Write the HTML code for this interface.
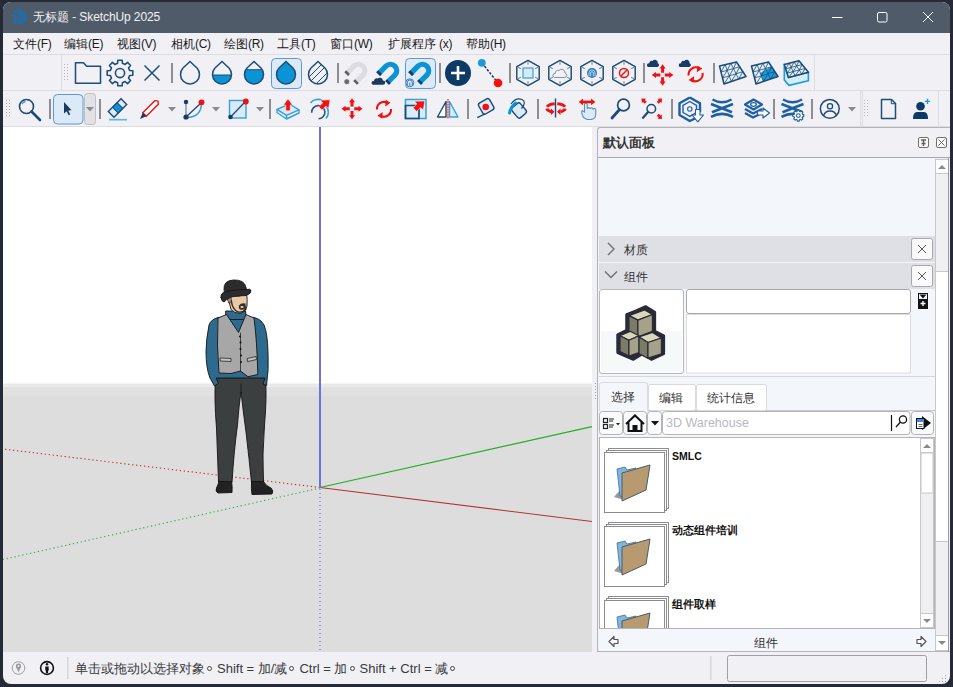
<!DOCTYPE html>
<html><head><meta charset="utf-8">
<style>
*{box-sizing:border-box}
html,body{margin:0;padding:0}
body{width:953px;height:687px;background:#262a36;position:relative;overflow:hidden;font-family:"Liberation Sans",sans-serif}
.a{position:absolute;white-space:nowrap}
.mi{position:absolute;top:37px;font-size:12px;line-height:15px;color:#1a1a1a;white-space:nowrap}
.l{letter-spacing:-0.3px}
svg{position:absolute;left:0;top:0}
</style></head><body>
<div class="a" style="left:3px;top:2px;width:947px;height:682px;border-radius:8px;background:#f0f0f5"></div>
<div class="a" style="left:3px;top:2px;width:947px;height:30.8px;background:#505b6a;border-radius:8px 8px 0 0"></div>
<div class="a" style="left:33px;top:10px;font-size:12px;line-height:15px;color:#f2f2f2">无标题<span style="letter-spacing:-0.1px"> - SketchUp 2025</span></div>
<div class="mi" style="left:13px">文件<span class="l">(F)</span></div>
<div class="mi" style="left:64px">编辑<span class="l">(E)</span></div>
<div class="mi" style="left:117px">视图<span class="l">(V)</span></div>
<div class="mi" style="left:171px">相机<span class="l">(C)</span></div>
<div class="mi" style="left:224px">绘图<span class="l">(R)</span></div>
<div class="mi" style="left:277px">工具<span class="l">(T)</span></div>
<div class="mi" style="left:330px">窗口<span class="l">(W)</span></div>
<div class="mi" style="left:388px">扩展程序<span class="l"> (x)</span></div>
<div class="mi" style="left:466px">帮助<span class="l">(H)</span></div>
<svg width="953" height="130" viewBox="0 0 953 130">
<defs>
  <clipPath id="winclip"><rect x="3" y="2" width="947" height="200"/></clipPath>
  <path id="drop" d="M0,-12.5 L6.98,-5.95 A9.5 9.5 0 1 1 -6.98,-5.95 Z"/>
  <clipPath id="half2"><rect x="-12" y="1" width="24" height="14"/></clipPath>
  <clipPath id="half3"><rect x="-12" y="-4.3" width="24" height="20"/></clipPath>
  <clipPath id="dropc"><use href="#drop"/></clipPath>
  <g id="sep"><rect x="-1" y="0" width="2" height="20" fill="#8d8d92"/></g>
  <path id="tri" d="M-4,-2 h8 l-4,4.5 z" fill="#8a8a8f"/>
  <g id="grip" fill="#b4b4bc">
    <rect x="0" y="0" width="1" height="1"/><rect x="3" y="0" width="1" height="1"/>
    <rect x="0" y="3" width="1" height="1"/><rect x="3" y="3" width="1" height="1"/>
    <rect x="0" y="6" width="1" height="1"/><rect x="3" y="6" width="1" height="1"/>
    <rect x="0" y="9" width="1" height="1"/><rect x="3" y="9" width="1" height="1"/>
    <rect x="0" y="12" width="1" height="1"/><rect x="3" y="12" width="1" height="1"/>
    <rect x="0" y="15" width="1" height="1"/><rect x="3" y="15" width="1" height="1"/>
  </g>
  <g id="hex" fill="none" stroke="#1d4a74" stroke-width="1.45">
    <path d="M0,-12.6 L11.2,-6.3 L11.2,6.3 L0,12.6 L-11.2,6.3 L-11.2,-6.3 Z" stroke-linejoin="round"/>
    <path d="M0,-11.5 v3.2 M10,-5.8 l-2.8,1.6 M-10,-5.8 l2.8,1.6 M0,11.5 v-3.2 M10,5.8 l-2.8,-1.6 M-10,5.8 l2.8,-1.6" stroke-width="1.1" stroke="#7890a8"/>
  </g>
  <g id="magnet">
    <path d="M-6,7 L-6,0 A6 6 0 0 1 6,0 L6,7" fill="none" stroke-width="5.5"/>
  </g>
  <g id="cloud"><path d="M-6,3 h12 a3,3 0 0 0 0,-6 a4,4 0 0 0 -7,-2 a3,3 0 0 0 -5,4 a2,2 0 0 0 0,4z"/></g>
</defs>
<g clip-path="url(#winclip)">
<!-- title bar icons -->
<g fill="none" stroke="#1b70b5" stroke-width="1.5" stroke-linejoin="round">
  <path d="M13.2,12.6 L19,9.4 L25.6,12.9 V20.6 L19.3,24.2"/>
  <path d="M15.6,13.4 L19,11.4 L22.9,13.6 V19.6 L19.8,21.4"/>
  <path d="M12.2,14.8 L18.6,18 V24.3 M12.4,18.2 L17.2,20.8 M12.6,21 L16.8,23.4"/>
  <path d="M17.2,12.6 L20.4,14.4 V20.5"/>
</g>
<g stroke="#ffffff" stroke-width="1" fill="none">
  <path d="M832,17.5 h10.5"/>
  <rect x="877.5" y="12.5" width="9.5" height="9.5" rx="1.5"/>
  <path d="M923,12 L933,22 M933,12 L923,22"/>
</g>
<!-- menu separator & toolbar panel outlines -->
<rect x="3" y="54" width="947" height="1" fill="#dcdce2"/>
<rect x="61" y="55" width="1" height="35" fill="#dcdce2"/>
<rect x="814" y="55" width="1" height="35" fill="#dcdce2"/>
<rect x="3" y="90" width="947" height="1" fill="#dcdce2"/>
<rect x="860" y="91" width="1" height="35" fill="#dcdce2"/>
<rect x="862" y="91" width="1" height="35" fill="#dcdce2"/>
<rect x="938" y="91" width="1" height="35" fill="#dcdce2"/>
<rect x="3" y="126" width="947" height="1" fill="#dcdce2"/>

<!-- ROW 1 -->
<use href="#grip" x="64" y="64"/>
<g fill="none" stroke="#1f4e79" stroke-width="1.55" stroke-linejoin="round">
  <path d="M75.5,62.8 H83.5 L86.6,66.2 H100.5 V83.2 H75.5 Z"/>
  <!-- gear -->
  <path d="M117.58,63.30 L117.85,60.18 L122.15,60.18 L122.42,63.30 L125.15,64.43 L127.55,62.42 L130.58,65.45 L128.57,67.85 L129.70,70.58 L132.82,70.85 L132.82,75.15 L129.70,75.42 L128.57,78.15 L130.58,80.55 L127.55,83.58 L125.15,81.57 L122.42,82.70 L122.15,85.82 L117.85,85.82 L117.58,82.70 L114.85,81.57 L112.45,83.58 L109.42,80.55 L111.43,78.15 L110.30,75.42 L107.18,75.15 L107.18,70.85 L110.30,70.58 L111.43,67.85 L109.42,65.45 L112.45,62.42 L114.85,64.43 Z"/>
  <circle cx="120" cy="73" r="4.6"/>
  <path d="M144.5,65.5 L159.5,80.5 M159.5,65.5 L144.5,80.5" stroke-width="1.5"/>
</g>
<use href="#sep" x="172" y="63"/>
<!-- drops -->
<g transform="translate(190,74)"><use href="#drop" fill="#f0f0f5" stroke="#1f4e79" stroke-width="1.55"/></g>
<g transform="translate(222,74)"><use href="#drop" fill="#0a94d6" clip-path="url(#half2)"/><use href="#drop" fill="none" stroke="#1f4e79" stroke-width="1.55"/><path d="M-9.3,1 h18.6" stroke="#1f4e79" stroke-width="1"/></g>
<g transform="translate(254,74)"><use href="#drop" fill="#0a94d6" clip-path="url(#half3)"/><use href="#drop" fill="none" stroke="#1f4e79" stroke-width="1.55"/><path d="M-8.2,-4.3 h16.4" stroke="#1f4e79" stroke-width="1"/></g>
<rect x="271.5" y="58.5" width="30" height="30" rx="4" fill="#dce9f7" stroke="#5c9ad6" stroke-width="1"/>
<g transform="translate(286,74)"><use href="#drop" fill="#0a94d6" stroke="#1f4e79" stroke-width="1.55"/></g>
<g transform="translate(318,74)">
  <g clip-path="url(#dropc)" stroke="#1f4e79" stroke-width="1"><path d="M-12,6 L6,-12 M-12,12 L12,-12 M-8,16 L14,-6 M-2,18 L16,0"/></g>
  <use href="#drop" fill="none" stroke="#1f4e79" stroke-width="1.55"/>
</g>
<use href="#sep" x="338" y="63"/>
<!-- magnets -->
<g transform="translate(358.4,70.7) rotate(45)">
  <path d="M-6.3,11 V0 A6.3 6.3 0 0 1 6.3,0 V11" fill="none" stroke="#dcdce2" stroke-width="5.3"/>
  <path d="M-6.3,8.3 v2.7 M6.3,8.3 v2.7" stroke="#5e5e64" stroke-width="5.3"/>
</g>
<circle cx="346.8" cy="81.7" r="3" fill="#6a6a70" stroke="#fff" stroke-width="0.8"/>
<rect x="405.5" y="58.5" width="30" height="30" rx="4" fill="#dce9f7" stroke="#5c9ad6" stroke-width="1"/>
<g transform="translate(390.4,70.7) rotate(45)">
  <path d="M-6.3,11 V0 A6.3 6.3 0 0 1 6.3,0 V11" fill="none" stroke="#0a94d6" stroke-width="5.3"/>
  <path d="M-6.3,8.3 v2.7 M6.3,8.3 v2.7" stroke="#1b3a5e" stroke-width="5.3"/>
</g>
<path d="M373,84.8 h10 a2.2,2.2 0 0 0 0,-4.4 a3.3,3.3 0 0 0 -5.5,-1.8 a2.6,2.6 0 0 0 -3.6,2.6 a1.8,1.8 0 0 0 -0.9,3.6z" fill="#1b3a5e"/>
<g transform="translate(422.4,70.7) rotate(45)">
  <path d="M-6.3,11 V0 A6.3 6.3 0 0 1 6.3,0 V11" fill="none" stroke="#0a94d6" stroke-width="5.3"/>
  <path d="M-6.3,8.3 v2.7 M6.3,8.3 v2.7" stroke="#1b3a5e" stroke-width="5.3"/>
</g>
<circle cx="409.8" cy="82.8" r="4.6" fill="#dce9f7"/>
<g fill="none" stroke="#2a6fb0" stroke-width="0.9"><circle cx="409.8" cy="82.8" r="4"/><path d="M407.3,85.5 v-3 a2.5,2.5 0 0 1 5,0 v3 M409.8,86 v-3.5"/></g>
<use href="#sep" x="440" y="63"/>
<circle cx="458" cy="73" r="13" fill="#0e3a66"/>
<path d="M451,73 h14 M458,66 v14" stroke="#fff" stroke-width="2.6"/>
<path d="M482,63 L498,83" stroke="#1b3a5e" stroke-width="1.5" stroke-dasharray="2.5,1.5"/>
<circle cx="481.8" cy="62.8" r="3.9" fill="#1a9ad9"/>
<circle cx="498" cy="83" r="4.3" fill="#f21010"/>
<use href="#sep" x="510" y="63"/>
<!-- hexes -->
<g transform="translate(528,73)"><use href="#hex"/><rect x="-5" y="-5" width="10" height="10" fill="#d6e9f8" stroke="#34a0dc" stroke-width="1.2"/></g>
<g transform="translate(560,73)"><use href="#hex"/><path d="M-5.5,4.5 h10 a2.3,2.3 0 0 0 0.5,-4.5 a3.4,3.4 0 0 0 -6,-2.5 a2.7,2.7 0 0 0 -3.7,3 a2,2 0 0 0 -0.8,4z" fill="none" stroke="#7c94ac" stroke-width="1"/></g>
<g transform="translate(592,73)"><use href="#hex"/><circle r="5" fill="#2a7cc0"/><g fill="none" stroke="#d8ecf8" stroke-width="0.8"><path d="M-3,3 v-3 a3,3 0 0 1 6,0 v3 M-1.3,3.5 v-3.5 a1.3,1.3 0 0 1 2.6,0 v3.5"/></g></g>
<g transform="translate(624,73)"><use href="#hex"/><circle r="4.5" fill="none" stroke="#f21010" stroke-width="1.5"/><path d="M-3,3 L3,-3" stroke="#f21010" stroke-width="1.5"/></g>
<use href="#sep" x="644" y="63"/>
<!-- cloud move -->
<path d="M648.2,66.9 h9 a1.9,1.9 0 0 0 0.6,-3.7 a3,3 0 0 0 -5.3,-2.3 a2.4,2.4 0 0 0 -3.2,2.6 a1.7,1.7 0 0 0 -1.1,3.4z" fill="#173d66"/>
<path d="M662.60,64.20 L665.60,68.40 L664.10,68.40 L664.10,72.80 L661.10,72.80 L661.10,68.40 L659.60,68.40 Z M662.60,85.80 L659.60,81.60 L661.10,81.60 L661.10,77.20 L664.10,77.20 L664.10,81.60 L665.60,81.60 Z M651.80,75.00 L656.00,72.00 L656.00,73.50 L660.40,73.50 L660.40,76.50 L656.00,76.50 L656.00,78.00 Z M673.40,75.00 L669.20,78.00 L669.20,76.50 L664.80,76.50 L664.80,73.50 L669.20,73.50 L669.20,72.00 Z" fill="#f21010"/>
<!-- cloud rotate -->
<path d="M680,66.9 h9 a1.9,1.9 0 0 0 0.6,-3.7 a3,3 0 0 0 -5.3,-2.3 a2.4,2.4 0 0 0 -3.2,2.6 a1.7,1.7 0 0 0 -1.1,3.4z" fill="#173d66"/>
<g fill="none" stroke="#f21010" stroke-width="2.1"><path d="M699.5,68.3 A7.3,7.3 0 0 0 688.6,75.5"/><path d="M691.5,80.2 A7.3,7.3 0 0 0 702.6,73"/></g>
<path d="M702.3,68.6 l-5.5,3.7 l0.5,-6.5z M688.6,80 l5.5,-3.7 l-0.5,6.5z" fill="#f21010"/>
<use href="#sep" x="714" y="63"/>
<!-- meshes -->
<path d="M719.50,66.00 L736.50,62.00 L746.00,76.50 L724.00,84.00 Z" fill="#e4f0f9"/>
<path d="M725.17,64.67 L731.33,81.50 M721.00,72.00 L739.67,66.83 M730.83,63.33 L738.67,79.00 M722.50,78.00 L742.83,71.67 M721.00,72.00 L725.17,64.67 M722.50,78.00 L727.22,70.28 M724.00,84.00 L729.28,75.89 M727.22,70.28 L730.83,63.33 M729.28,75.89 L733.44,68.56 M731.33,81.50 L736.06,73.78 M733.44,68.56 L736.50,62.00 M736.06,73.78 L739.67,66.83 M738.67,79.00 L742.83,71.67 " fill="none" stroke="#1d4a74" stroke-width="0.8"/>
<path d="M719.50,66.00 L736.50,62.00 L746.00,76.50 L724.00,84.00 Z" fill="none" stroke="#1d4a74" stroke-width="1.5" stroke-linejoin="round"/>
<path d="M751.50,66.00 L768.50,62.00 L778.00,76.50 L756.00,84.00 Z" fill="#e4f0f9"/>
<path d="M760.25,73.08 L771.35,66.35 L778.00,76.50 L763.33,81.50 Z" fill="#1a9be0"/>
<path d="M757.17,64.67 L763.33,81.50 M753.00,72.00 L771.67,66.83 M762.83,63.33 L770.67,79.00 M754.50,78.00 L774.83,71.67 M753.00,72.00 L757.17,64.67 M754.50,78.00 L759.22,70.28 M756.00,84.00 L761.28,75.89 M759.22,70.28 L762.83,63.33 M761.28,75.89 L765.44,68.56 M763.33,81.50 L768.06,73.78 M765.44,68.56 L768.50,62.00 M768.06,73.78 L771.67,66.83 M770.67,79.00 L774.83,71.67 " fill="none" stroke="#1d4a74" stroke-width="0.8"/>
<path d="M751.50,66.00 L768.50,62.00 L778.00,76.50 L756.00,84.00 Z" fill="none" stroke="#1d4a74" stroke-width="1.5" stroke-linejoin="round"/>
<path d="M788.5,77.5 L808.4,72.3 L808.4,80.7 L789,85.4 L784.3,80 V64.4 Z" fill="#d8ecf8" stroke="#1a9be0" stroke-width="1.6" stroke-linejoin="round"/>
<path d="M784.30,64.40 L799.00,60.70 L808.40,72.30 L788.50,77.50 Z" fill="#e4f0f9"/>
<path d="M789.20,63.17 L795.13,75.77 M785.70,68.77 L802.13,64.57 M794.10,61.93 L801.77,74.03 M787.10,73.13 L805.27,68.43 M785.70,68.77 L789.20,63.17 M787.10,73.13 L791.18,67.37 M788.50,77.50 L793.16,71.57 M791.18,67.37 L794.10,61.93 M793.16,71.57 L796.66,65.97 M795.13,75.77 L799.21,70.00 M796.66,65.97 L799.00,60.70 M799.21,70.00 L802.13,64.57 M801.77,74.03 L805.27,68.43 " fill="none" stroke="#1d4a74" stroke-width="0.8"/>
<path d="M784.30,64.40 L799.00,60.70 L808.40,72.30 L788.50,77.50 Z" fill="none" stroke="#1d4a74" stroke-width="1.5" stroke-linejoin="round"/>

<!-- ROW 2 -->
<use href="#grip" x="6" y="100"/>
<g fill="none" stroke="#1d4a74">
  <circle cx="26.5" cy="106.5" r="7" stroke-width="1.6"/>
  <path d="M31.5,111.5 L40,120" stroke-width="2.6" stroke-linecap="round"/>
  <path d="M22,104 A5,5 0 0 1 25.5,101.5" stroke="#34a0dc" stroke-width="1.3"/>
</g>
<use href="#sep" x="50" y="99"/>
<rect x="53.5" y="94.5" width="29.5" height="29.5" rx="4" fill="#dce9f7" stroke="#5c9ad6" stroke-width="1"/>
<path d="M64,102 L64,113.5 L66.6,111.2 L68.6,115.2 L70.2,114.4 L68.3,110.5 L71.5,110.3 Z" fill="#1b3a5e"/>
<rect x="84.5" y="93.5" width="11" height="31" rx="3" fill="#e2e2e6" stroke="#c0c0c4" stroke-width="1"/>
<use href="#tri" x="90" y="109"/>
<use href="#sep" x="100" y="99"/>
<!-- eraser -->
<g transform="translate(117.5,108) rotate(-45)">
  <rect x="-9" y="-4" width="18" height="8" fill="#d9ebf8" stroke="#1d4a74" stroke-width="1.4"/>
  <rect x="-3" y="-4" width="6.5" height="8" fill="#0a94d6" stroke="#1d4a74" stroke-width="1"/>
</g>
<path d="M109,119.7 h18" stroke="#5ab6e6" stroke-width="1.6"/>
<!-- pencil -->
<g transform="translate(149.5,109.5) rotate(-45)">
  <path d="M-7,-2.5 L10,-2.5 L12,0 L10,2.5 L-7,2.5 Z" fill="#fff" stroke="#f21010" stroke-width="1.4"/>
  <path d="M-7,-2.5 L-13.5,0 L-7,2.5 Z" fill="#1b3a5e"/>
</g>
<use href="#tri" x="172" y="109"/>
<!-- arc -->
<path d="M186,102 V117" stroke="#5f84a8" stroke-width="1.2"/>
<path d="M186,117 L201.5,102.5" stroke="#1d4a74" stroke-width="1.3"/>
<path d="M186.5,117.5 Q201.5,117.5 201.5,102.5" fill="none" stroke="#34a0dc" stroke-width="1.5"/>
<circle cx="186" cy="102" r="2.2" fill="#1b3a5e"/>
<circle cx="186" cy="117" r="2.6" fill="#1b3a5e"/>
<circle cx="201.5" cy="102.3" r="2.9" fill="#f21010"/>
<use href="#tri" x="216" y="109"/>
<!-- rect -->
<rect x="229.5" y="100.5" width="16.5" height="17.5" fill="#d9ebf8" stroke="#34a0dc" stroke-width="1.4"/>
<path d="M230.5,117 L245,102" stroke="#1d4a74" stroke-width="1.3"/>
<circle cx="230.5" cy="117" r="2.3" fill="#1b3a5e"/>
<circle cx="245.8" cy="101.5" r="2.9" fill="#f21010"/>
<use href="#tri" x="260" y="109"/>
<use href="#sep" x="270" y="99"/>
<!-- push pull -->
<path d="M277,109.4 L289.5,104 L299,109.8 L286.5,115.3 Z" fill="#d9ebf8" stroke="#34a0dc" stroke-width="1.4" stroke-linejoin="round"/>
<path d="M277,109.4 V112.5 L286.5,119 L299,113 V109.8 M286.5,115.3 V119" fill="none" stroke="#34a0dc" stroke-width="1.4" stroke-linejoin="round"/>
<path d="M288,98.8 L292.5,105 H290.2 V110.8 H285.8 V105 H283.5 Z" fill="#f21010" stroke="#fff" stroke-width="0.5"/>
<!-- follow me -->
<path d="M310.5,103 A9.5,9.5 0 0 1 322.5,100.5" fill="none" stroke="#34a0dc" stroke-width="1.6"/>
<path d="M326,106 A9.5,9.5 0 0 1 326,118.5" fill="none" stroke="#34a0dc" stroke-width="1.6"/>
<path d="M311.7,112.7 A6.6,6.6 0 1 1 318.5,118.8" fill="none" stroke="#2a5580" stroke-width="1.6"/>
<path d="M330,99.8 l-1.4,8.6 l-2.7,-2.3 l-3.9,4 l-3.3,-3.3 l4,-3.9 l-2.3,-2.7 z" fill="#f21010" stroke="#fff" stroke-width="0.5"/>
<!-- move -->
<path d="M352.00,98.30 L355.00,102.30 L353.50,102.30 L353.50,106.60 L350.50,106.60 L350.50,102.30 L349.00,102.30 Z M352.00,119.30 L349.00,115.30 L350.50,115.30 L350.50,111.00 L353.50,111.00 L353.50,115.30 L355.00,115.30 Z M341.50,108.80 L345.50,105.80 L345.50,107.30 L349.80,107.30 L349.80,110.30 L345.50,110.30 L345.50,111.80 Z M362.50,108.80 L358.50,111.80 L358.50,110.30 L354.20,110.30 L354.20,107.30 L358.50,107.30 L358.50,105.80 Z" fill="#f21010"/>
<!-- rotate -->
<g fill="none" stroke="#f21010" stroke-width="2.1"><path d="M386.8,102.5 A7,7 0 0 0 377,109.5"/><path d="M381,116 A7,7 0 0 0 391,109"/></g>
<path d="M390.5,102.8 l-5.2,3.8 l0.3,-6.8z M377.4,115.7 l5.2,-3.8 l-0.3,6.8z" fill="#f21010"/>
<!-- scale -->
<rect x="405.5" y="99.5" width="20.5" height="19" fill="#d9ebf8" stroke="#34a0dc" stroke-width="1.5"/>
<path d="M405.5,105.5 H419 V118.5 H405.5 Z" fill="none" stroke="#1d4a74" stroke-width="1.7"/>
<path d="M424.8,101 l-1.5,9 l-2.8,-2.4 l-3.8,3.8 l-3.6,-3.6 l3.8,-3.8 l-2.4,-2.8 z" fill="#f21010" stroke="#fff" stroke-width="0.5"/>
<!-- flip -->
<path d="M446,101.5 L437.5,117 H446 Z" fill="#fff" stroke="#1d4a74" stroke-width="1.4" stroke-linejoin="round"/>
<path d="M449.5,101.5 L458,117 H449.5 Z" fill="#d9ebf8" stroke="#34a0dc" stroke-width="1.4" stroke-linejoin="round"/>
<path d="M448,99 V119" stroke="#f07070" stroke-width="2"/>
<path d="M448,100.5 V119" stroke="#fff" stroke-width="2" stroke-dasharray="0.8,1.7" opacity="0.7"/>
<use href="#sep" x="468" y="99"/>
<!-- tape -->
<g transform="translate(486.2,106.4) rotate(-30)">
  <rect x="-6.3" y="-6.3" width="12.6" height="12.6" rx="2.5" fill="#d9ebf8" stroke="#1d4a74" stroke-width="1.4"/>
</g>
<circle cx="485.7" cy="107" r="3.3" fill="#f21010"/>
<path d="M477.3,117.6 L485,113.8" stroke="#1d4a74" stroke-width="1.3"/>
<!-- paint bucket -->
<g transform="translate(519,110.5) rotate(-40)">
  <rect x="-5.5" y="-6.5" width="11" height="13" rx="2.5" fill="#d9ebf8" stroke="#1d4a74" stroke-width="1.4"/>
</g>
<path d="M511,104 Q516,97 522,99.5 Q527,102 521.5,108.5" fill="none" stroke="#1d4a74" stroke-width="1.2"/>
<path d="M515.5,103 Q510,108 509.5,113" fill="none" stroke="#0a94d6" stroke-width="3" stroke-linecap="round"/>
<use href="#sep" x="538" y="99"/>
<!-- orbit -->
<path d="M547.02,106.86 A9.3,4.4 0 0 1 554.71,103.64 M557.29,103.64 A9.3,4.4 0 0 1 564.98,106.86 M546.79,108.61 A9.3,4.4 0 0 0 551.63,111.88 M565.21,108.61 A9.3,4.4 0 0 1 560.37,111.88" fill="none" stroke="#f21010" stroke-width="3"/>
<path d="M554.5,111.8 L551,108.6 L551,115 Z M557,111.8 L560.5,108.6 L560.5,115 Z" fill="#f21010"/>
<path d="M555.5,98.5 V117.5" stroke="#1d4a74" stroke-width="1.4"/>
<!-- pan -->
<path d="M583.5,117.5 Q581,113 582,110.5 L584.5,112 V104.5 a1.4,1.4 0 0 1 2.8,0 V109 a1.4,1.4 0 0 1 2.8,0 a1.4,1.4 0 0 1 2.8,0.5 a1.4,1.4 0 0 1 2.8,1 V114.5 Q595.5,119 591,119.5 H587 Z" fill="#d9ebf8" stroke="#6a8cac" stroke-width="1.1"/>
<path d="M582,101.9 h10.5" stroke="#f21010" stroke-width="2.6"/>
<path d="M578.8,101.9 l4.2,-3.3 v6.6z M595.3,101.9 l-4.2,-3.3 v6.6z" fill="#f21010"/>
<!-- zoom -->
<circle cx="623.5" cy="105" r="5.9" fill="none" stroke="#1d4a74" stroke-width="1.7"/>
<path d="M619.3,109.8 L612,118" stroke="#1d4a74" stroke-width="2.8" stroke-linecap="round"/>
<!-- zoom extents -->
<circle cx="651.3" cy="108.7" r="4.3" fill="none" stroke="#1d4a74" stroke-width="1.5"/>
<path d="M648.3,111.8 L643,117.8" stroke="#1d4a74" stroke-width="2.2" stroke-linecap="round"/>
<path d="M641.50,98.50 L646.10,98.85 L644.89,100.06 L646.66,101.82 L644.82,103.66 L643.06,101.89 L641.85,103.10 Z M662.00,98.50 L661.65,103.10 L660.44,101.89 L658.68,103.66 L656.84,101.82 L658.61,100.06 L657.40,98.85 Z M662.00,119.00 L657.40,118.65 L658.61,117.44 L656.84,115.68 L658.68,113.84 L660.44,115.61 L661.65,114.40 Z" fill="#f21010"/>
<use href="#sep" x="672" y="99"/>
<!-- 3dw -->
<path d="M689.8,97.5 L700,103.3 V112 M696,118 L689.8,121 L679.5,115 V103.3 L689.8,97.5" fill="none" stroke="#1d5fa0" stroke-width="2.4" stroke-linejoin="round"/>
<path d="M689.8,101.5 L696.5,105.3 V112.5 L689.8,116.3 L683,112.5 V105.3 Z" fill="none" stroke="#1d5fa0" stroke-width="1.4" stroke-linejoin="round"/>
<circle cx="689.8" cy="109" r="2.2" fill="none" stroke="#1d5fa0" stroke-width="1.1"/>
<path d="M695.5,109.5 h4.5 v5.5 h3.5 L697.8,121.8 L692,115 h3.5 Z" fill="#fff" stroke="#1d5fa0" stroke-width="1.1" stroke-linejoin="round"/>
<!-- ext warehouse -->
<g fill="none" stroke="#1d5fa0" stroke-linejoin="round">
<path d="M712.5,99.5 Q722,105 731.5,99.5" stroke-width="2.4"/>
<path d="M711,104 L722,108.2 L733,104" stroke-width="2.8"/>
<path d="M712,112.3 L722,108.2 L732,112.3" stroke-width="2.6"/>
<path d="M711,116.8 Q722,111 733,116.8" stroke-width="2.6"/>
</g>
<!-- layout-like stack -->
<path d="M745,113 L753,117.5 L762,113" fill="none" stroke="#1d5fa0" stroke-width="2.3"/>
<path d="M745,109 L753,113.5 L762,109" fill="none" stroke="#1d5fa0" stroke-width="2.3"/>
<path d="M745,104.5 L753.5,99.5 L762,104.5 L753.5,109.5 Z" fill="#fff" stroke="#1d5fa0" stroke-width="2.2" stroke-linejoin="round"/>
<ellipse cx="753.5" cy="104.5" rx="2.8" ry="1.8" fill="none" stroke="#1d5fa0" stroke-width="1.3"/>
<path d="M757.5,111 h5.5 v-3 l6.5,5 l-6.5,5 v-3 h-5.5 z" fill="#fff" stroke="#1d5fa0" stroke-width="1.2" stroke-linejoin="round"/>
<use href="#sep" x="774" y="99"/>
<!-- ext manager -->
<g fill="none" stroke="#1d5fa0" stroke-linejoin="round">
<path d="M783.0,99.5 Q792.5,105 802.0,99.5" stroke-width="2.4"/>
<path d="M781.5,104 L792.5,108.2 L803.5,104" stroke-width="2.8"/>
<path d="M782.5,112.3 L792.5,108.2 L802.5,112.3" stroke-width="2.6"/>
<path d="M781.5,116.8 Q792.5,111 803.5,116.8" stroke-width="2.6"/>
</g>
<path d="M802.43,114.41 L803.81,114.63 L803.81,116.57 L802.43,116.79 L802.06,117.68 L802.89,118.81 L801.51,120.19 L800.38,119.36 L799.49,119.73 L799.27,121.11 L797.33,121.11 L797.11,119.73 L796.22,119.36 L795.09,120.19 L793.71,118.81 L794.54,117.68 L794.17,116.79 L792.79,116.57 L792.79,114.63 L794.17,114.41 L794.54,113.52 L793.71,112.39 L795.09,111.01 L796.22,111.84 L797.11,111.47 L797.33,110.09 L799.27,110.09 L799.49,111.47 L800.38,111.84 L801.51,111.01 L802.89,112.39 L802.06,113.52 Z" fill="#fff" stroke="#1d5fa0" stroke-width="1.1" stroke-linejoin="round"/>
<circle cx="798.3" cy="115.6" r="1.9" fill="none" stroke="#1d5fa0" stroke-width="1.1"/>
<use href="#sep" x="812" y="99"/>
<!-- profile -->
<circle cx="829.8" cy="108.8" r="9.4" fill="none" stroke="#1d4a74" stroke-width="1.5"/>
<circle cx="830" cy="106.3" r="2.6" fill="none" stroke="#1d4a74" stroke-width="1.3"/>
<path d="M823.5,116.2 Q824.5,111 830,111 Q835.5,111 836.5,116.2" fill="none" stroke="#1d4a74" stroke-width="1.3"/>
<use href="#tri" x="852" y="109"/>
<use href="#grip" x="864" y="100"/>
<!-- page -->
<path d="M881.5,99.5 H891.5 L895.5,103.5 V118.5 H881.5 Z" fill="none" stroke="#1f4e79" stroke-width="1.5" stroke-linejoin="round"/><path d="M891.3,100 V103.7 H895" fill="none" stroke="#1f4e79" stroke-width="1"/>
<!-- person -->
<circle cx="920.5" cy="106.3" r="4.3" fill="#0e3a66"/>
<path d="M913,119 Q913,112 917,112 H924 Q928,112 928,119 Z" fill="#0e3a66"/>
<path d="M927.5,98.8 v5.2 M924.9,101.4 h5.2" stroke="#1a9ad9" stroke-width="1.3"/>
</g>
</svg>
<div class="a" style="left:3px;top:127px;width:589px;height:525px;overflow:hidden;background:#fff">
<svg width="589" height="525" viewBox="3 127 589 525" style="left:0;top:0">
  <rect x="3" y="127" width="589" height="257" fill="#ffffff"/>
  <rect x="3" y="383.5" width="589" height="3" fill="#e9e9e9"/>
  <rect x="3" y="386.5" width="589" height="9.5" fill="#e1e1e1"/>
  <rect x="3" y="396" width="589" height="256" fill="#dddddd"/>
  <!-- axes -->
  <path d="M320,487.5 L3,449" stroke="#cc2a2a" stroke-width="1.1" stroke-dasharray="1.3,2.7"/>
  <path d="M320,488 L3,559.5" stroke="#3aac3a" stroke-width="1.1" stroke-dasharray="1.3,2.7"/>
  <path d="M320,489 V652" stroke="#8282d6" stroke-width="1.4" stroke-dasharray="1.1,2.9"/>
  <path d="M320,487.5 L592,521.5" stroke="#b43434" stroke-width="1.15"/>
  <path d="M320,487.5 L592,426.5" stroke="#22b022" stroke-width="1.25"/>
  <path d="M320,127 V488" stroke="#7070d8" stroke-width="2"/>
  <!-- person -->
  <g stroke="#141414" stroke-width="0.9" stroke-linejoin="round" stroke-linecap="round">
    <!-- pants -->
    <path d="M215.5,378 Q214,398 216.5,428 L218.5,482 L232,482.5 Q234,450 237.5,425 Q239,405 241,392 Q243,410 246,432 Q249,458 251.5,482.5 L263.5,482 Q262,455 264.5,425 Q267,398 265.5,378 Z" fill="#3b3f40"/>
    <path d="M241,392 V384" fill="none" stroke-width="0.7"/>
    <!-- shoes -->
    <path d="M219,481.5 L231.5,481.5 Q232.5,486 232,492.5 L218,493 Q215,491.5 216.5,488 Q218,485 219,481.5 Z" fill="#222"/>
    <path d="M251.5,481.5 L263.5,481.5 Q266,486 271,488 Q274,491 272,494 L252,494.5 Q251,489 251.5,481.5 Z" fill="#222"/>
    <!-- sweater body + arms -->
    <path d="M218.5,317.5 Q211,319 209,325 Q206,340 206,352 Q206,368 210,378 L214.5,386 L218.5,383.5 L216,378 L265,378 L263,384 L266.5,385.5 Q269,370 268,352 Q267.5,333 264,325 Q261,319 254,317.5 Z" fill="#2d6a8d"/>
    <path d="M226,311 L245.5,311 L246.5,319.5 L226,319.5 Z" fill="#2d6a8d"/>
    <!-- vest -->
    <path d="M218,318 L226.5,314.5 L238.5,332.5 L246,314.5 L254,318 Q257,340 257.8,374.5 L248,376.7 L240.5,371 L231,373.5 L219,373 Q216.5,345 218,318 Z" fill="#a7a7a7"/>
    <path d="M240.5,333 V371" fill="none" stroke-width="0.7"/>
    <path d="M220.5,358 L231,358.5 L231,361.5 L220.5,361 Z M247.5,358.5 L256,356.5 L256.5,359.5 L248,361.5 Z" fill="#c4c4c4" stroke-width="0.7"/>
    <g fill="#111" stroke="none"><circle cx="240" cy="336.5" r="1"/><circle cx="240.5" cy="342.5" r="1"/><circle cx="240.5" cy="349" r="1"/><circle cx="241" cy="355.5" r="1"/><circle cx="241" cy="362" r="1"/></g>
    <!-- face -->
    <path d="M228.5,294 L246.5,291.5 Q247.5,300 247,306 Q246,311 240.5,313.5 Q234,313.5 231,309.5 Q229,304 228.5,294 Z" fill="#e8cba6"/>
    <path d="M228,295 Q226.5,299 228.5,303 L231.5,302.5 L231,295 Z" fill="#9c8e7c" stroke-width="0.6"/>
    <path d="M231.5,301 Q232,309 238,312 Q243,313 246,309" fill="none" stroke="#2a2420" stroke-width="1.3"/>
    <path d="M239,305.5 Q241,302.5 245.5,303.5 L246,308.5 Q243,310.5 240,309.5 Q238,308 239,305.5 Z" fill="#3a3028" stroke="none"/>
    <ellipse cx="242" cy="307" rx="1.6" ry="1.1" fill="#f0d8bc" stroke="none"/>
    <path d="M236,296.5 h4" fill="none" stroke="#333" stroke-width="0.6"/>
    <!-- hat -->
    <path d="M224,289 Q223.5,280.5 233.5,280 Q244.5,279.5 246,287.5 L246.5,290 Q238,293 225,294 Z" fill="#2c2c2c"/>
    <path d="M221,297.5 Q220.5,293 225.5,291.5 Q236,289.5 246.5,289.5 Q250.5,288.5 251,290.5 Q251.5,293.5 246,295.5 Q238,295.5 231,297 Q226,299.5 224,302 Q221.5,301.5 221,297.5 Z" fill="#2c2c2c"/>
  </g>
</svg>
</div>
<div class="a" style="left:597px;top:127px;width:353px;height:525px;background:#f0f0f5;border:1px solid #b4b4b8;border-right:none;border-radius:3px 0 0 0"></div>
<div class="a" style="left:603px;top:135px;font-size:13px;line-height:16px;font-weight:bold;color:#333">默认面板</div>
<svg width="953" height="687" viewBox="0 0 953 687">
  <rect x="595" y="383" width="1" height="1" fill="#a0a0a8"/><rect x="595" y="386" width="1" height="1" fill="#a0a0a8"/><rect x="595" y="389" width="1" height="1" fill="#a0a0a8"/><rect x="595" y="392" width="1" height="1" fill="#a0a0a8"/><rect x="595" y="395" width="1" height="1" fill="#a0a0a8"/><rect x="595" y="398" width="1" height="1" fill="#a0a0a8"/>
  <!-- title bottom line -->
  <rect x="598" y="157" width="352" height="1" fill="#a8a8ac"/>
  <!-- pin & close -->
  <rect x="918.5" y="137.5" width="10" height="10" rx="1.5" fill="#fafafa" stroke="#707070" stroke-width="1"/>
  <path d="M921,140 h5 M923.5,140 v6 M921.5,143.5 h4" stroke="#606060" stroke-width="1.5"/>
  <rect x="936.5" y="137.5" width="10" height="10" rx="1.5" fill="#fafafa" stroke="#707070" stroke-width="1"/>
  <path d="M938.5,139.5 l6,6 M944.5,139.5 l-6,6" stroke="#555" stroke-width="0.9"/>
  <!-- content bg -->
  <rect x="599" y="158" width="336" height="493" fill="#f3f6fa"/>
  <!-- outer scrollbar -->
  <rect x="935.5" y="159.5" width="13" height="491" fill="#f0f0f3" stroke="#c8c8cc" stroke-width="1"/>
  <rect x="935.5" y="159.5" width="13" height="14" fill="#fff" stroke="#c8c8cc" stroke-width="1"/>
  <path d="M938,169 h8 l-4,-4 z" fill="#8a8a8e"/>
  <rect x="935.5" y="271.5" width="13" height="270" fill="#fff" stroke="#c8c8cc" stroke-width="1"/>
  <rect x="935.5" y="635.5" width="13" height="15" fill="#fff" stroke="#c8c8cc" stroke-width="1"/>
  <path d="M938,641 h8 l-4,4 z" fill="#8a8a8e"/>
  <rect x="948" y="158" width="1" height="494" fill="#9a9a9e"/>
  <!-- section bands -->
  <rect x="599" y="236" width="336" height="26" fill="#dfdfe6"/>
  <rect x="599" y="262" width="336" height="1" fill="#f6f6fa"/>
  <rect x="599" y="263" width="336" height="26" fill="#dfdfe6"/>
  <path d="M608,243 L614,249 L608,255" fill="none" stroke="#707070" stroke-width="1.4"/>
  <path d="M605,271.5 L611,277.5 L617,271.5" fill="none" stroke="#707070" stroke-width="1.4"/>
  <rect x="911.5" y="238.5" width="21" height="21" rx="2" fill="#fafafa" stroke="#a8a8ac"/>
  <path d="M918,245 l8,8 M926,245 l-8,8" stroke="#555" stroke-width="1"/>
  <rect x="911.5" y="265.5" width="21" height="21" rx="2" fill="#fafafa" stroke="#a8a8ac"/>
  <path d="M918,272 l8,8 M926,272 l-8,8" stroke="#555" stroke-width="1"/>
  <!-- components info -->
  <rect x="599.5" y="289.5" width="84" height="84" rx="2.5" fill="#fff" stroke="#b8b8bc"/>
  <rect x="601" y="331" width="81" height="41" fill="#f6f9f9"/>
  <g transform="translate(640.7,333) scale(1.12) translate(-638.5,-329.5)">
<g stroke="#2a2a38" stroke-width="2.6" stroke-linejoin="round">
    <path d="M634,310 L643,306 L651,311 L651,328 L659,332 L659,348 L648,353 L640,348 L632,353 L618,347 L618,331 L626,327 L626,313 Z" fill="#2a2a38"/>
  </g>
  <g stroke="#2a2a38" stroke-width="1.1" stroke-linejoin="round">
    <path d="M628,314 L642,309 L649,313 L636,318 Z" fill="#d9d8b8"/>
    <path d="M628,314 L636,318 L636,333 L628,329 Z" fill="#7b7b66"/>
    <path d="M636,318 L649,313 L649,328 L636,333 Z" fill="#a4a38a"/>
    <path d="M620,332 L629,328 L637,332 L628,336 Z" fill="#d9d8b8"/>
    <path d="M620,332 L628,336 L628,350 L620,346 Z" fill="#7b7b66"/>
    <path d="M628,336 L637,332 L637,347 L628,350 Z" fill="#a4a38a"/>
    <path d="M637,333 L649,329 L657,334 L645,338 Z" fill="#d9d8b8"/>
    <path d="M637,333 L645,338 L645,352 L637,348 Z" fill="#7b7b66"/>
    <path d="M645,338 L657,334 L657,348 L645,352 Z" fill="#a4a38a"/>
  </g>
  </g>
  <rect x="686.5" y="289.5" width="224" height="24" rx="2.5" fill="#fff" stroke="#a8a8ac"/>
  <rect x="686.5" y="314.5" width="224" height="58.5" fill="#fff" stroke="#dcdce0"/>
  <rect x="918" y="293" width="10" height="16" fill="#111"/>
  <rect x="919" y="294" width="8" height="5" fill="#f4f4f4"/>
  <path d="M919.5,294.5 h7 l-3.5,4 z" fill="#111"/>
  <path d="M920.5,303.5 h5 M923,301 v5" stroke="#fff" stroke-width="1.4"/>
  <rect x="599" y="376" width="336" height="1" fill="#d6d6dc"/>
  <!-- tabs -->
  <rect x="599" y="410" width="336" height="1" fill="#c8c8cc"/>
  <rect x="599.5" y="382.5" width="48" height="29" rx="2" fill="#f3f6fa" stroke="#d9d9de"/>
  <rect x="648.5" y="384.5" width="47" height="26" rx="2" fill="#fff" stroke="#d9d9de"/>
  <rect x="696.5" y="384.5" width="70" height="26" rx="2" fill="#fff" stroke="#d9d9de"/>
  <rect x="600" y="409" width="47" height="3" fill="#f3f6fa"/>
  <!-- tool row -->
  <rect x="599.5" y="411.5" width="23" height="23" rx="3" fill="#f8fafb" stroke="#b4b4b8"/>
  <rect x="623.5" y="411.5" width="23" height="23" rx="3" fill="#f8fafb" stroke="#b4b4b8"/>
  <rect x="647.5" y="411.5" width="14" height="23" rx="3" fill="#f8fafb" stroke="#b4b4b8"/>
  <rect x="662.5" y="411.5" width="247.5" height="23" rx="3" fill="#fff" stroke="#b4b4b8"/>
  <rect x="911.5" y="411.5" width="22" height="23" rx="3" fill="#f8fafb" stroke="#b4b4b8"/>
  <g fill="none" stroke="#222" stroke-width="1.2">
    <rect x="603.5" y="418.5" width="4" height="4"/><rect x="603.5" y="424.5" width="4" height="4"/>
    <path d="M609,419 h5 M609,421 h4 M609,425 h5 M609,427 h4"/>
  </g>
  <path d="M616,423 h4 l-2,2.5z" fill="#222"/>
  <path d="M626,424 L635,415.5 L644,424 M628.5,422 V431 H641.5 V422" fill="none" stroke="#111" stroke-width="2"/>
  <rect x="632.5" y="425" width="5" height="6" fill="#111"/>
  <path d="M651,421 h8 l-4,4.5z" fill="#111"/>
  <path d="M891.5,415 V431" stroke="#111" stroke-width="1.2"/>
  <circle cx="903" cy="419.5" r="3.6" fill="none" stroke="#111" stroke-width="1.3"/>
  <path d="M900.5,422 L896,427" stroke="#111" stroke-width="1.3"/>
  <path d="M922,416 l9,7 l-9,7z" fill="#111"/>
  <rect x="916.5" y="418.5" width="7.5" height="10" fill="#fff" stroke="#111" stroke-width="1"/>
  <rect x="917" y="419" width="6.5" height="3" fill="#3a8de0"/>
  <path d="M918.5,424.5 h4 M918.5,426.5 h4" stroke="#444" stroke-width="0.8"/>
  <!-- list box -->
  <rect x="599.5" y="437.5" width="335" height="191" fill="#fff" stroke="#b4b4b8"/>
  <rect x="920.5" y="438.5" width="13" height="189" fill="#f0f0f3" stroke="#c8c8cc"/>
  <rect x="920.5" y="438.5" width="13" height="14" fill="#fff" stroke="#c8c8cc"/>
  <path d="M923,448 h8 l-4,-4 z" fill="#8a8a8e"/>
  <rect x="921" y="453" width="12" height="40" fill="#fff" stroke="#c8c8cc"/>
  <rect x="920.5" y="613.5" width="13" height="14" fill="#fff" stroke="#c8c8cc"/>
  <path d="M923,619 h8 l-4,4 z" fill="#8a8a8e"/>
  <!-- nav row -->
  <rect x="600" y="629" width="335" height="22" fill="#f3f6fa"/>
  <path d="M609,641.5 l5,-5 v3 h4 v4 h-4 v3 z" fill="#fafafa" stroke="#555" stroke-width="1.2" stroke-linejoin="round"/>
  <path d="M926,641.5 l-5,-5 v3 h-4 v4 h4 v3 z" fill="#fafafa" stroke="#555" stroke-width="1.2" stroke-linejoin="round"/>
</svg>
<div class="a" style="left:624px;top:243px;font-size:12px;line-height:15px;color:#333">材质</div>
<div class="a" style="left:624px;top:270px;font-size:12px;line-height:15px;color:#333">组件</div>
<div class="a" style="left:611px;top:390px;font-size:12px;line-height:15px;color:#333">选择</div>
<div class="a" style="left:659px;top:391px;font-size:12px;line-height:15px;color:#333">编辑</div>
<div class="a" style="left:707px;top:391px;font-size:12px;line-height:15px;color:#333">统计信息</div>
<div class="a" style="left:666px;top:416px;font-size:12.5px;line-height:15px;color:#b8b8c0">3D Warehouse</div>
<div class="a" style="left:754px;top:636px;font-size:12px;line-height:15px;color:#333">组件</div>
<svg width="953" height="687" viewBox="0 0 953 687" style="clip-path:inset(438px 19px 59px 600px)">
<rect x="608.5" y="448.5" width="60" height="60" fill="#fff" stroke="#8c8c90"/>
<rect x="606.5" y="450.5" width="60" height="60" fill="#fff" stroke="#8c8c90"/>
<rect x="604.5" y="452.5" width="60" height="60" fill="#fff" stroke="#8c8c90"/>
<path d="M614,497 L620,490 L624,500 Z" fill="#9a9a9a"/>
<path d="M617,469 L625,467 L627,470 L636,468 L626,498 L620,496 Z" fill="#7eb6e0" stroke="#4a6a8a" stroke-width="0.8"/>
<path d="M622,473 L650,465 L646,490 L622,501 Z" fill="#b89a70" stroke="#4a5a6a" stroke-width="1"/>
</svg>
<div class="a" style="left:672px;top:450px;font-size:10.5px;line-height:13px;font-weight:bold;color:#111">SMLC</div>
<svg width="953" height="687" viewBox="0 0 953 687" style="clip-path:inset(438px 19px 59px 600px)">
<rect x="608.5" y="522.5" width="60" height="60" fill="#fff" stroke="#8c8c90"/>
<rect x="606.5" y="524.5" width="60" height="60" fill="#fff" stroke="#8c8c90"/>
<rect x="604.5" y="526.5" width="60" height="60" fill="#fff" stroke="#8c8c90"/>
<path d="M614,571 L620,564 L624,574 Z" fill="#9a9a9a"/>
<path d="M617,543 L625,541 L627,544 L636,542 L626,572 L620,570 Z" fill="#7eb6e0" stroke="#4a6a8a" stroke-width="0.8"/>
<path d="M622,547 L650,539 L646,564 L622,575 Z" fill="#b89a70" stroke="#4a5a6a" stroke-width="1"/>
</svg>
<div class="a" style="left:672px;top:524px;font-size:10.5px;line-height:13px;font-weight:bold;color:#111">动态组件培训</div>
<svg width="953" height="687" viewBox="0 0 953 687" style="clip-path:inset(438px 19px 59px 600px)">
<rect x="608.5" y="596.5" width="60" height="60" fill="#fff" stroke="#8c8c90"/>
<rect x="606.5" y="598.5" width="60" height="60" fill="#fff" stroke="#8c8c90"/>
<rect x="604.5" y="600.5" width="60" height="60" fill="#fff" stroke="#8c8c90"/>
<path d="M614,645 L620,638 L624,648 Z" fill="#9a9a9a"/>
<path d="M617,617 L625,615 L627,618 L636,616 L626,646 L620,644 Z" fill="#7eb6e0" stroke="#4a6a8a" stroke-width="0.8"/>
<path d="M622,621 L650,613 L646,638 L622,649 Z" fill="#b89a70" stroke="#4a5a6a" stroke-width="1"/>
</svg>
<div class="a" style="left:672px;top:598px;font-size:10.5px;line-height:13px;font-weight:bold;color:#111">组件取样</div><svg width="953" height="687" viewBox="0 0 953 687">
  <circle cx="18.5" cy="668" r="6.3" fill="none" stroke="#a0a0a0" stroke-width="1"/>
  <circle cx="18.5" cy="666" r="2.6" fill="#9a9a9a"/>
  <path d="M16.2,667 L18.5,672.5 L20.8,667 Z" fill="#9a9a9a"/>
  <circle cx="18.5" cy="666" r="1" fill="#f0f0f5"/>
  <circle cx="47" cy="668" r="6.4" fill="none" stroke="#111" stroke-width="1.6"/>
  <circle cx="47" cy="664.3" r="1.2" fill="#111"/>
  <path d="M45.3,666.5 h3.4 v4 h-0.6 v2.5 h-2.2 v-2.5 h-0.6 z" fill="#111"/>
  <rect x="67" y="657" width="1.5" height="22" fill="#d8d8dc"/>
  <rect x="710" y="656" width="1.5" height="24" fill="#d8d8dc"/>
  <rect x="727.5" y="655.5" width="199" height="26" rx="2" fill="#f0f0f5" stroke="#a0a0a4"/>
  <g fill="#a8a8ac"><rect x="945" y="675" width="1" height="1"/><rect x="942" y="678" width="1" height="1"/><rect x="945" y="678" width="1" height="1"/><rect x="939" y="681" width="1" height="1"/><rect x="942" y="681" width="1" height="1"/><rect x="945" y="681" width="1" height="1"/></g>
</svg>
<style>.dot{display:inline-block;width:12px;height:10px;position:relative}.dot:after{content:"";position:absolute;left:2px;top:2.5px;width:5px;height:5px;border:1px solid #444;border-radius:50%;box-sizing:border-box}</style>
<div class="a" style="left:75px;top:661px;font-size:13px;line-height:15px;color:#3a3a3a">单击或拖动以选择对象<span class="dot"></span>Shift = 加/减<span class="dot"></span>Ctrl = 加<span class="dot"></span>Shift + Ctrl = 减<span class="dot"></span></div>
</body></html>
